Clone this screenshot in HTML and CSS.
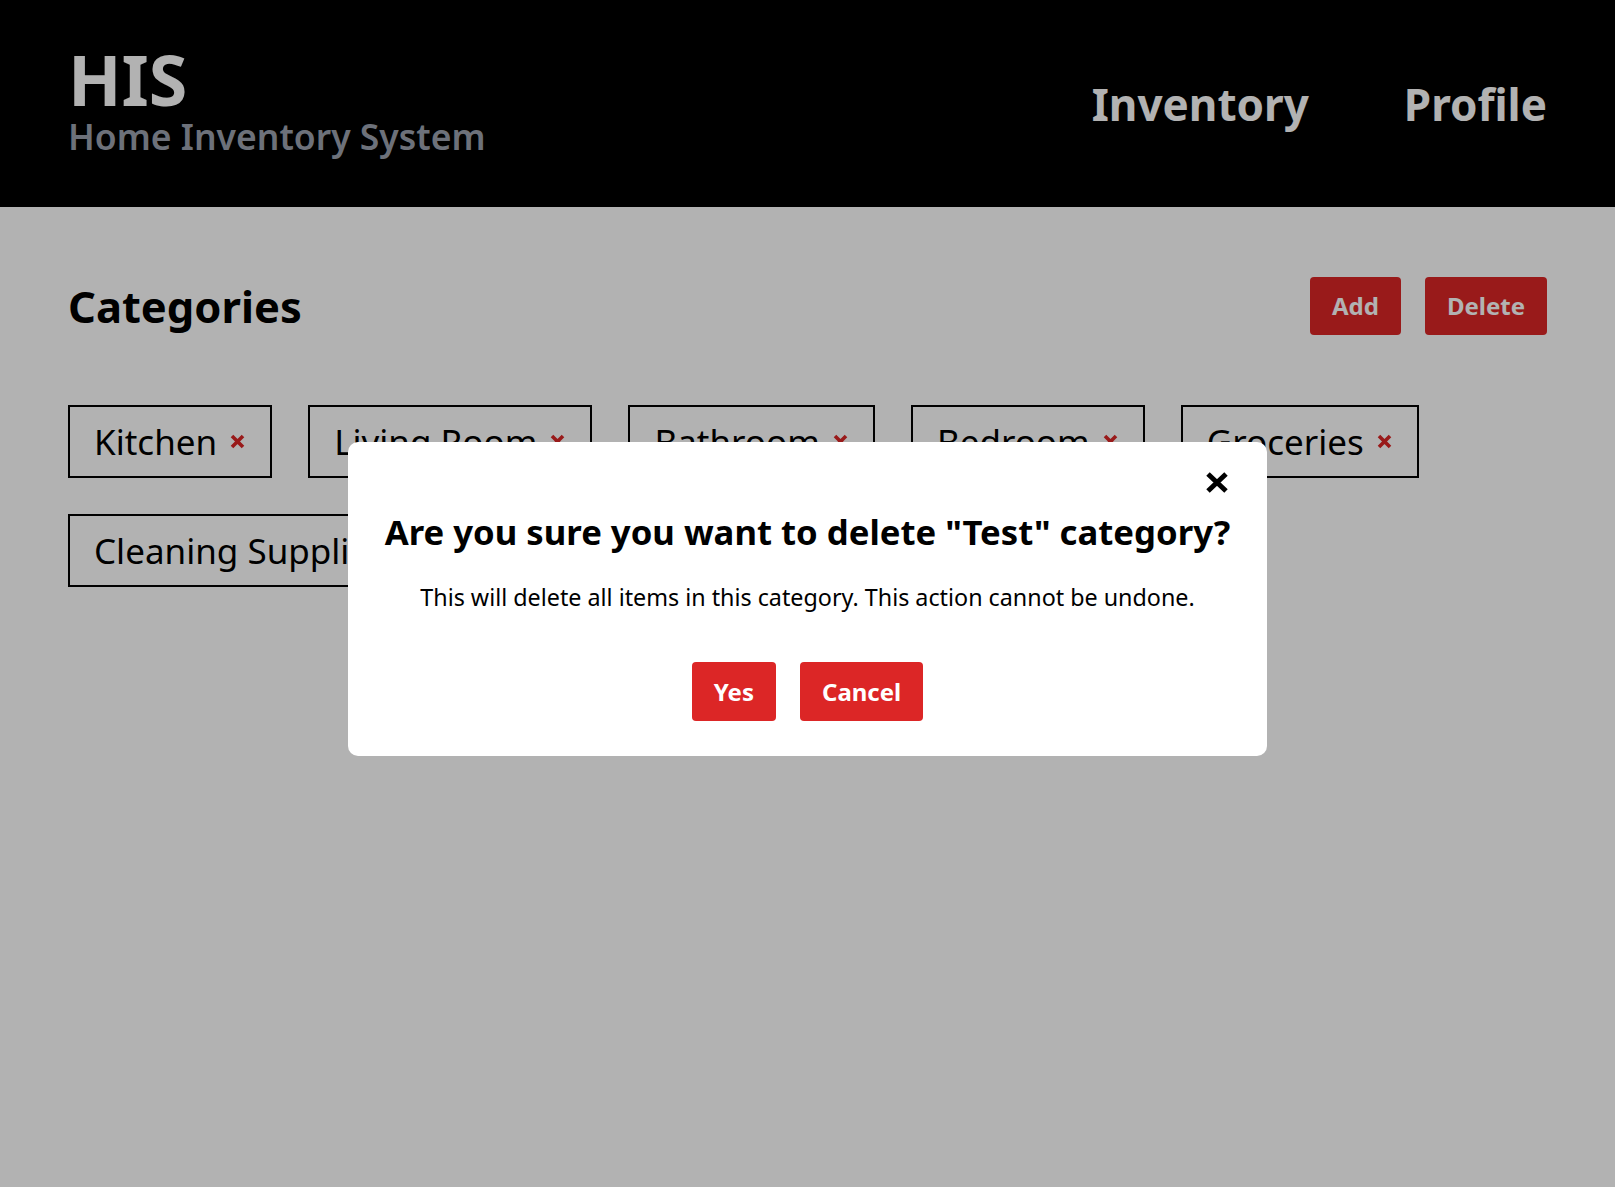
FILE: index.html
```html
<!DOCTYPE html>
<html lang="en">
<head>
<meta charset="utf-8">
<title>HIS - Categories</title>
<link rel="stylesheet" href="styles.css">
</head>
<body>
<header class="topbar">
  <div class="brand">
    <div class="brand-title">HIS</div>
    <div class="brand-sub">Home Inventory System</div>
  </div>
  <nav class="nav">
    <a class="nav-link" href="#">Inventory</a>
    <a class="nav-link" href="#">Profile</a>
  </nav>
</header>
<main class="main">
  <div class="section-head">
    <h1 class="section-title">Categories</h1>
    <div class="actions">
      <button class="btn">Add</button>
      <button class="btn">Delete</button>
    </div>
  </div>
  <ul class="chips">
    <li class="chip"><span>Kitchen</span><svg class="chip-x" viewBox="0 0 15 15"><path d="M2 2L13 13M13 2L2 13"/></svg></li>
    <li class="chip"><span>Living Room</span><svg class="chip-x" viewBox="0 0 15 15"><path d="M2 2L13 13M13 2L2 13"/></svg></li>
    <li class="chip"><span>Bathroom</span><svg class="chip-x" viewBox="0 0 15 15"><path d="M2 2L13 13M13 2L2 13"/></svg></li>
    <li class="chip"><span>Bedroom</span><svg class="chip-x" viewBox="0 0 15 15"><path d="M2 2L13 13M13 2L2 13"/></svg></li>
    <li class="chip"><span>Groceries</span><svg class="chip-x" viewBox="0 0 15 15"><path d="M2 2L13 13M13 2L2 13"/></svg></li>
    <li class="chip"><span>Cleaning Supplies</span><svg class="chip-x" viewBox="0 0 15 15"><path d="M2 2L13 13M13 2L2 13"/></svg></li>
  </ul>
</main>
<div class="overlay"></div>
<div class="modal" role="dialog">
  <button class="modal-close" aria-label="Close"><svg viewBox="0 0 24 23"><path d="M3 3L21 20M21 3L3 20"/></svg></button>
  <h2 class="modal-title">Are you sure you want to delete "Test" category?</h2>
  <p class="modal-text">This will delete all items in this category. This action cannot be undone.</p>
  <div class="modal-actions">
    <button class="btn btn-modal">Yes</button>
    <button class="btn btn-modal">Cancel</button>
  </div>
</div>
</body>
</html>
```

FILE: styles.css
```css
* { box-sizing: border-box; }
html, body { margin: 0; padding: 0; }
body {
  font-family: "Noto Sans", "Open Sans", sans-serif;
  background: #ffffff;
  color: #000;
  min-height: 1187px;
}
.topbar {
  background: #000;
  height: 207px;
  padding: 0 68px 0 68px;
  display: flex;
  align-items: center;
  justify-content: space-between;
}
.brand { padding-bottom: 9px; }
.brand-title {
  font-size: 70px;
  line-height: 72px;
  font-weight: 700;
  color: #ffffff;
}
.brand-sub {
  margin-top: 1px;
  font-size: 35.5px;
  line-height: 40px;
  font-weight: 600;
  color: #9ca3af;
}
.nav { display: flex; gap: 95px; }
.nav-link {
  font-size: 44px;
  font-weight: 700;
  color: #ffffff;
  text-decoration: none;
}
.main { padding: 69px 68px; }
.section-head {
  display: flex;
  align-items: center;
  justify-content: space-between;
}
.section-title {
  margin: 0;
  font-size: 43.5px;
  font-weight: 700;
}
.actions { display: flex; gap: 24px; }
.btn {
  font-family: inherit;
  font-size: 24px;
  font-weight: 700;
  line-height: 34px;
  padding: 12px 22px;
  border: none;
  border-radius: 4px;
  background: #dc2626;
  color: #ffffff;
}
.btn-modal { line-height: 35px; }
.chips {
  list-style: none;
  margin: 69px 0 0 0;
  padding: 0;
  display: flex;
  flex-wrap: wrap;
  gap: 36px;
}
.chip {
  display: flex;
  align-items: center;
  gap: 13px;
  border: 2px solid #000;
  padding: 10px 25px 10px 24px;
  font-size: 35px;
  line-height: 49px;
}
.chip-x { width: 15px; height: 15px; }
.chip-x path { stroke: #dc2626; stroke-width: 3.6; fill: none; }
.overlay {
  position: fixed;
  inset: 0;
  background: rgba(0, 0, 0, 0.3);
}
.modal {
  position: absolute;
  top: 442px;
  left: 348px;
  width: 919px;
  background: #fff;
  border-radius: 10px;
  padding: 66px 20px 35px;
  text-align: center;
}
.modal-close {
  position: absolute;
  top: 29px;
  right: 38px;
  width: 24px;
  height: 23px;
  padding: 0;
  border: none;
  background: transparent;
}
.modal-close svg { width: 24px; height: 23px; display: block; }
.modal-close path { stroke: #000; stroke-width: 5; fill: none; }
.modal-title {
  margin: 0;
  font-size: 34.7px;
  font-weight: 700;
  white-space: nowrap;
}
.modal-text {
  margin: 26px 0 0 0;
  font-size: 23.3px;
}
.modal-actions {
  margin-top: 49px;
  display: flex;
  justify-content: center;
  gap: 24px;
}
```
